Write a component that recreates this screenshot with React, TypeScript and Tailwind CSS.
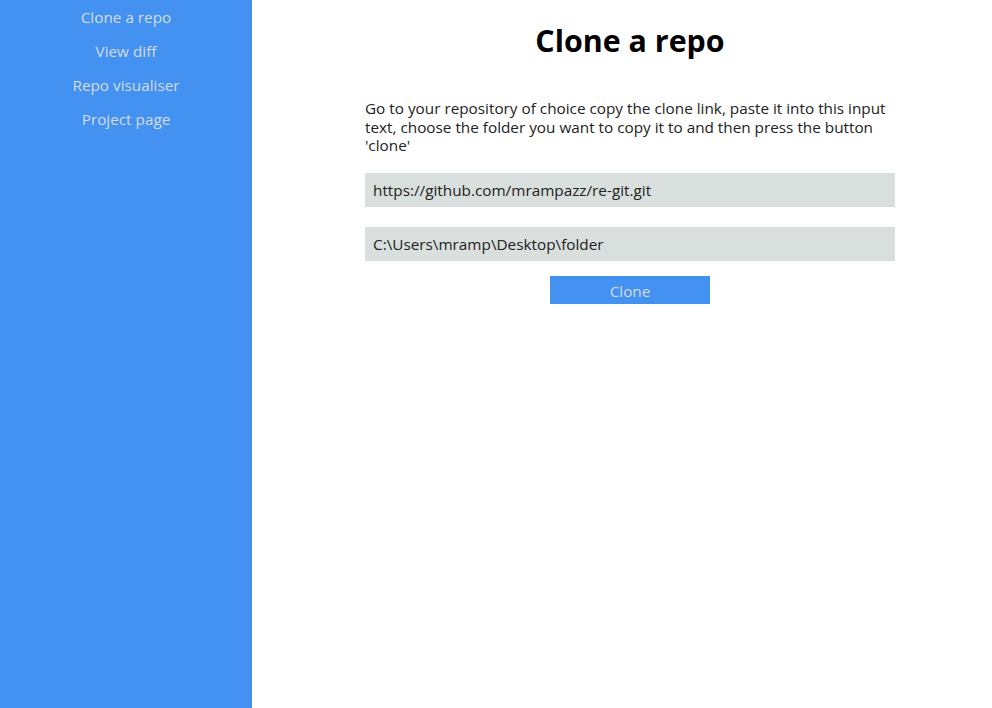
import React from "react";

export default function App() {
  const font = { fontFamily: '"Open Sans", "Noto Sans", sans-serif' };
  return (
    <div className="flex h-[708px] w-[992px] bg-white" style={font}>
      <nav className="flex w-[252px] shrink-0 flex-col items-center bg-[#4391f0] pt-[5px] text-[15.3px] text-[#d3dce6]">
        <a className="h-[34px] leading-[24px]">Clone a repo</a>
        <a className="h-[34px] leading-[24px]">View diff</a>
        <a className="h-[34px] leading-[24px]">Repo visualiser</a>
        <a className="h-[34px] leading-[24px]">Project page</a>
      </nav>
      <main className="flex flex-1 flex-col items-center pl-[113px] pr-[97px]">
        <h1 className="mt-[21px] text-[30.4px] font-bold leading-[40px] text-black">Clone a repo</h1>
        <p className="mt-[38px] w-full text-[15.3px] leading-[18.5px] text-[#222]">
          Go to your repository of choice copy the clone link, paste it into this input text, choose the folder you want to copy it to and then press the button 'clone'
        </p>
        <input
          className="mt-[18px] h-[34px] w-full bg-[#d9dfdd] px-[8px] text-[15.3px] text-[#222] outline-none"
          defaultValue="https://github.com/mrampazz/re-git.git"
        />
        <input
          className="mt-[20px] h-[34px] w-full bg-[#d9dfdd] px-[8px] text-[15.3px] text-[#222] outline-none"
          defaultValue="C:\Users\mramp\Desktop\folder"
        />
        <button className="mt-[15px] h-[28px] w-[160px] bg-[#4391f0] pt-[3px] text-[15.3px] leading-[24px] text-[#d3dce6]">Clone</button>
      </main>
    </div>
  );
}
